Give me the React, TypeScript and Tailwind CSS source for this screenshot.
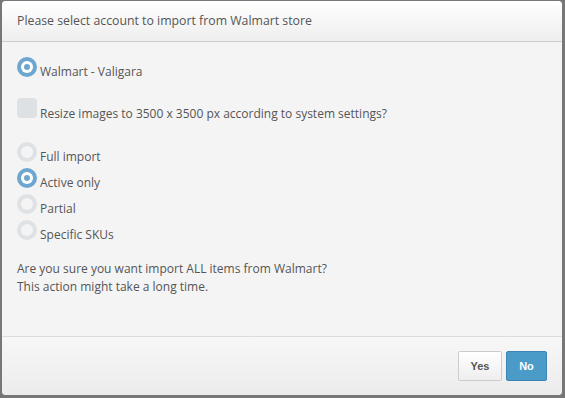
import React, { useState } from "react";

function Radio({ checked }: { checked: boolean }) {
  return checked ? (
    <span className="w-[20px] h-[20px] shrink-0 rounded-full bg-[#6ea6d0] flex items-center justify-center">
      <span className="w-[12px] h-[12px] rounded-full bg-white flex items-center justify-center">
        <span className="w-[6px] h-[6px] rounded-full bg-[#6ea6d0]" />
      </span>
    </span>
  ) : (
    <span className="w-[20px] h-[20px] shrink-0 rounded-full bg-[#dfe2e4] flex items-center justify-center">
      <span className="w-[12px] h-[12px] rounded-full bg-[#f4f4f4]" />
    </span>
  );
}

const modes = ["Full import", "Active only", "Partial", "Specific SKUs"];

export default function App() {
  const [mode, setMode] = useState(1);

  return (
    <div className="w-[565px] h-[398px] bg-[#777777] pt-[1px] pl-[2px] pr-[3px] pb-[3px] font-['Open_Sans',sans-serif] text-[#555555]">
      <div className="w-full h-full rounded-[4px] overflow-hidden bg-[#f4f4f4] flex flex-col">
        {/* Header */}
        <div className="h-[41px] shrink-0 flex items-center px-[15px] pt-[1px] bg-gradient-to-b from-white to-[#eeeeee] border-b border-[#cdcdcd] text-[12.3px]">
          Please select account to import from Walmart store
        </div>

        {/* Body */}
        <div className="flex-1 px-[15px] pt-[15px] text-[12px]">
          <label className="flex items-end gap-[3px] h-[20px] leading-[10px]">
            <Radio checked />
            <span>Walmart - Valigara</span>
          </label>

          <label className="flex items-end gap-[3px] h-[20px] mt-[21px] leading-[8px]">
            <span className="w-[20px] h-[20px] shrink-0 rounded-[4px] bg-[#dde1e3]" />
            <span>Resize images to 3500 x 3500 px according to system settings?</span>
          </label>

          <div className="mt-[24px] flex flex-col gap-[6px]">
            {modes.map((m, i) => (
              <label
                key={m}
                onClick={() => setMode(i)}
                className="flex items-end gap-[3px] h-[20px] leading-[10px] cursor-pointer"
              >
                <Radio checked={mode === i} />
                <span>{m}</span>
              </label>
            ))}
          </div>

          <p className="mt-[20px] leading-[18px]">
            Are you sure you want import ALL items from Walmart?
            <br />
            This action might take a long time.
          </p>
        </div>

        {/* Footer */}
        <div className="h-[59px] shrink-0 border-t border-[#dcdcdc] bg-gradient-to-b from-[#f7f7f7] to-[#ececec] flex items-start justify-end gap-[4px] pt-[14px] px-[15px] font-['Liberation_Sans',sans-serif] font-bold text-[11px]">
          <button className="w-[44px] h-[30px] rounded-[2px] border border-[#cccccc] bg-gradient-to-b from-white to-[#eeeeee] text-[#555555]">
            Yes
          </button>
          <button className="w-[41px] h-[30px] rounded-[2px] border border-[#3a85b5] bg-[#4b9bc9] text-white">
            No
          </button>
        </div>
      </div>
    </div>
  );
}
